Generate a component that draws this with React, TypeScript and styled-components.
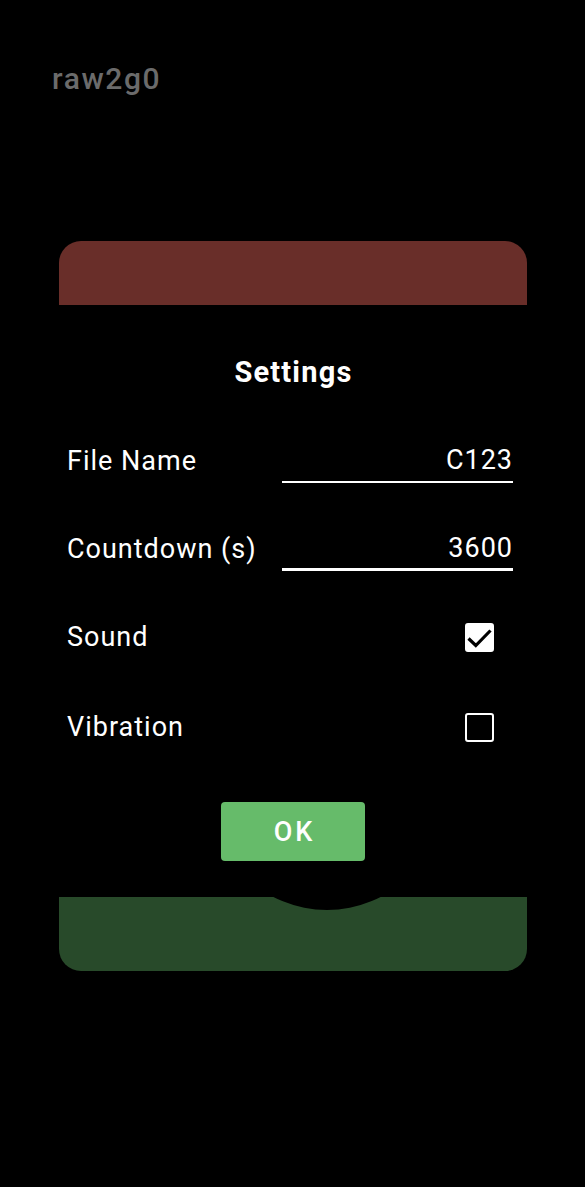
import React, { useState } from "react";
import styled, { createGlobalStyle } from "styled-components";

const GlobalStyle = createGlobalStyle`
  html, body {
    margin: 0;
    padding: 0;
    background: #000000;
    font-family: Roboto, "Noto Sans", sans-serif;
  }
`;

const Screen = styled.div`
  width: 585px;
  height: 1187px;
  background: #000000;
  overflow: hidden;
`;

const AppTitle = styled.div`
  padding: 61px 0 0 52px;
  height: 41px;
  line-height: 35px;
  font-size: 30px;
  font-weight: 500;
  letter-spacing: 1.6px;
  color: #6b6b6b;
`;

const Card = styled.div`
  margin: 139px 0 0 59px;
  width: 468px;
  border-radius: 22px;
  overflow: hidden;
  display: flex;
  flex-direction: column;
`;

const CardTop = styled.div`
  height: 64px;
  background: #692e29;
`;

const CardBottom = styled.div`
  position: relative;
  height: 74px;
  background: #284a2a;
  overflow: hidden;

  &::before {
    content: "";
    position: absolute;
    left: 151px;
    top: -221px;
    width: 234px;
    height: 234px;
    border-radius: 50%;
    background: #000000;
  }
`;

const Dialog = styled.div`
  height: 592px;
  background: #000000;
  display: flex;
  flex-direction: column;
`;

const DialogTitle = styled.div`
  margin-top: 50px;
  height: 34px;
  line-height: 34px;
  text-align: center;
  font-size: 29px;
  font-weight: 700;
  letter-spacing: 1.2px;
  padding-left: 1px;
  color: #ffffff;
`;

const Form = styled.div`
  margin-top: 28px;
  padding: 0 14px 0 8px;
  display: flex;
  flex-direction: column;
`;

const Row = styled.div<{ $height: number }>`
  display: flex;
  align-items: center;
  justify-content: space-between;
  height: ${(p) => p.$height}px;
`;

const Label = styled.div`
  font-size: 27px;
  letter-spacing: 1px;
  color: #ffffff;
`;

const Field = styled.div<{ $focused?: boolean }>`
  width: 231px;
  height: 44px;
  box-sizing: border-box;
  display: flex;
  align-items: center;
  justify-content: flex-end;
  font-size: 27px;
  letter-spacing: 1px;
  color: #ffffff;
  border-bottom: ${(p) => (p.$focused ? "3px" : "2px")} solid #ffffff;
  padding-top: ${(p) => (p.$focused ? "1px" : "0")};
`;

const Box = styled.div<{ $checked: boolean }>`
  width: 29px;
  height: 29px;
  box-sizing: border-box;
  margin-right: 19px;
  border-radius: 3px;
  border: 2px solid #ffffff;
  background: ${(p) => (p.$checked ? "#ffffff" : "transparent")};
  display: flex;
  align-items: center;
  justify-content: center;
`;

const OkButton = styled.button`
  align-self: center;
  margin-top: 29px;
  width: 144px;
  height: 59px;
  border: none;
  border-radius: 4px;
  background: #66bb6a;
  color: #ffffff;
  font-family: Roboto, "Noto Sans", sans-serif;
  font-size: 27px;
  font-weight: 500;
  letter-spacing: 3px;
  padding: 0 0 0 3px;
`;

const Check = ({ checked }: { checked: boolean }) => (
  <Box $checked={checked}>
    {checked && (
      <svg width="25" height="25" viewBox="0 0 25 25">
        <path d="M1.5 13.5l7.3 7L23.5 5.5" fill="none" stroke="#000" strokeWidth="3.2" />
      </svg>
    )}
  </Box>
);

const App = () => {
  const [sound] = useState(true);
  const [vibration] = useState(false);

  return (
    <Screen>
      <GlobalStyle />
      <AppTitle>raw2g0</AppTitle>
      <Card>
        <CardTop />
        <Dialog>
          <DialogTitle>Settings</DialogTitle>
          <Form>
            <Row $height={88}>
              <Label>File Name</Label>
              <Field>C123</Field>
            </Row>
            <Row $height={88}>
              <Label>Countdown (s)</Label>
              <Field $focused>3600</Field>
            </Row>
            <Row $height={88}>
              <Label>Sound</Label>
              <Check checked={sound} />
            </Row>
            <Row $height={92}>
              <Label>Vibration</Label>
              <Check checked={vibration} />
            </Row>
          </Form>
          <OkButton>OK</OkButton>
        </Dialog>
        <CardBottom />
      </Card>
    </Screen>
  );
};

export default App;
